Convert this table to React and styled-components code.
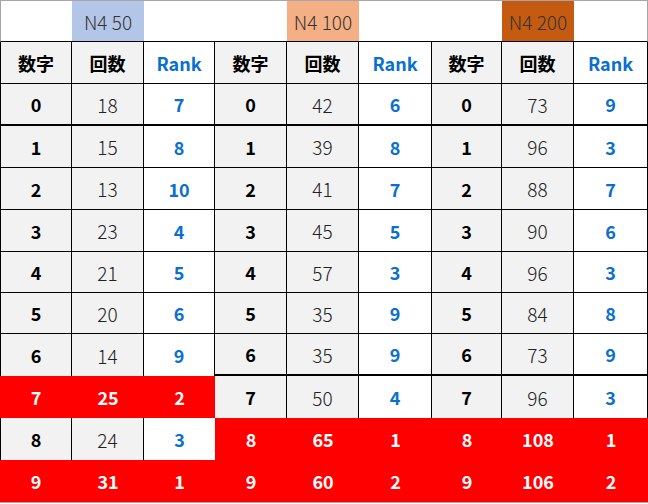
import React from "react";
import styled, { createGlobalStyle } from "styled-components";

const GlobalStyle = createGlobalStyle`
  html, body {
    margin: 0;
    padding: 0;
    background: #ffffff;
  }
  body {
    font-family: "Noto Sans CJK JP", "Noto Sans", sans-serif;
  }
`;

const COLS = [72, 72, 71, 72, 72, 73, 70, 72, 74];
const ROWS = [41, 42, 42, 42, 42, 42, 41, 41, 42, 42, 42, 42];

const groups = [
  {
    label: "N4 50",
    tag: "#b4c6e7",
    counts: [18, 15, 13, 23, 21, 20, 14, 25, 24, 31],
    ranks: [7, 8, 10, 4, 5, 6, 9, 2, 3, 1],
    hot: [7, 9],
  },
  {
    label: "N4 100",
    tag: "#f4b084",
    counts: [42, 39, 41, 45, 57, 35, 35, 50, 65, 60],
    ranks: [6, 8, 7, 5, 3, 9, 9, 4, 1, 2],
    hot: [8, 9],
  },
  {
    label: "N4 200",
    tag: "#c55a11",
    counts: [73, 96, 88, 90, 96, 84, 73, 96, 108, 106],
    ranks: [9, 3, 7, 6, 3, 8, 9, 3, 1, 2],
    hot: [8, 9],
  },
];

const Sheet = styled.div`
  display: grid;
  grid-template-columns: ${COLS.map((w) => `${w}px`).join(" ")};
  grid-template-rows: ${ROWS.map((h) => `${h}px`).join(" ")};
  border-top: 1px solid #a6a6a6;
  border-bottom: 1px solid #a6a6a6;
  width: 648px;
`;

const borderFor = (kind, color) => {
  if (kind === "thick") return `2px solid ${color}`;
  if (kind === "thin") return `1px solid ${color}`;
  return "none";
};

const Cell = styled.div`
  box-sizing: border-box;
  display: flex;
  align-items: center;
  justify-content: center;
  background: ${(p) => p.$bg};
  color: ${(p) => p.$fg};
  font-size: ${(p) => (p.$light ? "19px" : "18px")};
  font-weight: ${(p) => (p.$light ? 300 : 700)};
  border-bottom: ${(p) => borderFor(p.$bb, "#000")};
  border-right: ${(p) => borderFor(p.$br, p.$edge || "#000")};
  border-left: ${(p) => borderFor(p.$bl, p.$edge || "#000")};
  line-height: 1;
`;

const Tag = styled(Cell)`
  font-weight: 300;
  font-size: 19px;
  color: #333;
`;

const BLUE = "#0a6fd0";
const GRAY = "#f2f2f2";
const RED = "#ff0000";

const isHot = (row, col) => {
  if (row < 0 || row > 9 || col < 0 || col > 8) return false;
  return groups[Math.floor(col / 3)].hot.includes(row);
};

export default function App() {
  const cells = [];

  // tag row
  for (let c = 0; c < 9; c++) {
    const g = groups[Math.floor(c / 3)];
    const isTag = c % 3 === 1;
    cells.push(
      <Tag
        key={`t${c}`}
        $bg={isTag ? g.tag : "#fff"}
        $fg="#333"
        $bb="thin"
        $bl={c === 0 ? "thin" : "none"}
        $br={c === 8 ? "thin" : "none"}
        $edge="#a6a6a6"
      >
        {isTag ? g.label : ""}
      </Tag>
    );
  }

  // header row
  const heads = ["数字", "回数", "Rank"];
  for (let c = 0; c < 9; c++) {
    const k = c % 3;
    cells.push(
      <Cell
        key={`h${c}`}
        $bg={k === 2 ? "#fff" : GRAY}
        $fg={k === 2 ? BLUE : "#000"}
        $bb="thin"
        $br="thin"
        $bl={c === 0 ? "thin" : "none"}
      >
        {heads[k]}
      </Cell>
    );
  }

  // data rows
  for (let r = 0; r < 10; r++) {
    for (let c = 0; c < 9; c++) {
      const g = groups[Math.floor(c / 3)];
      const k = c % 3;
      const hot = isHot(r, c);
      const below = isHot(r + 1, c);
      const right = c === 8 ? false : isHot(r, c + 1);
      let bb = "thin";
      if (hot || below) bb = "none";
      else if (r === 0 || (r === 6 && c >= 3)) bb = "thick";
      const value = k === 0 ? r : k === 1 ? g.counts[r] : g.ranks[r];
      cells.push(
        <Cell
          key={`d${r}-${c}`}
          $bg={hot ? RED : k === 2 ? "#fff" : GRAY}
          $fg={hot ? "#fff" : k === 2 ? BLUE : k === 1 ? "#222" : "#000"}
          $light={!hot && k === 1}
          $bb={bb}
          $br={hot || right ? "none" : "thin"}
          $bl={c === 0 && !hot ? "thin" : "none"}
        >
          {value}
        </Cell>
      );
    }
  }

  return (
    <>
      <GlobalStyle />
      <Sheet>{cells}</Sheet>
    </>
  );
}
